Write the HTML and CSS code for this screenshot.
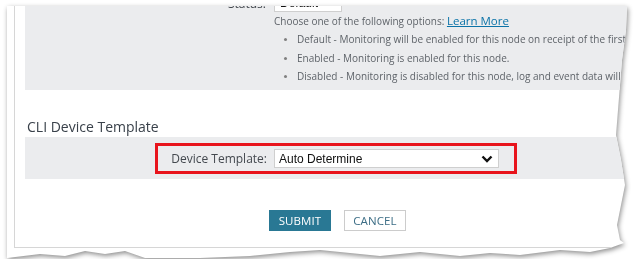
FILE: index.html
```html
<!DOCTYPE html>
<html lang="en">

<head>
  <meta charset="UTF-8" />
  <meta name="viewport" content="width=device-width, initial-scale=1" />
  <title>Node Settings - CLI Device Template</title>
  <link rel="stylesheet" href="styles.css">
</head>

<body>
  <div class="shadow-wrap">
    <div class="paper">
      <div class="frame">
        <div class="content">

          <section class="panel status-panel">
            <div class="field-row status-row">
              <span class="field-label">Status:</span>
              <div class="select select-small">
                <span>Default</span>
              </div>
            </div>
            <div class="field-row">
              <span></span>
              <div class="help">
                <p class="help-intro">Choose one of the following options: <a href="#">Learn More</a></p>
                <ul class="help-list">
                  <li>Default - Monitoring will be enabled for this node on receipt of the first event from it.</li>
                  <li>Enabled - Monitoring is enabled for this node.</li>
                  <li>Disabled - Monitoring is disabled for this node, log and event data will not be stored.</li>
                </ul>
              </div>
            </div>
          </section>

          <h2 class="section-title">CLI Device Template</h2>

          <section class="panel template-panel">
            <div class="highlight">
              <label class="field-label">Device Template:</label>
              <div class="select select-wide">
                <span>Auto Determine</span>
                <svg class="chevron" width="12" height="8" viewBox="0 0 12 8" aria-hidden="true">
                  <path d="M1.5 1.5 L6 6 L10.5 1.5" fill="none" stroke="#111" stroke-width="2.4" />
                </svg>
              </div>
            </div>
          </section>

          <div class="actions">
            <button type="button" class="btn btn-primary">SUBMIT</button>
            <button type="button" class="btn btn-secondary">CANCEL</button>
          </div>

        </div>
      </div>
    </div>
  </div>
</body>

</html>
```

FILE: styles.css
```css
:root {
  --color-panel: #ebecee;
  --color-border: #d6d6d6;
  --color-text: #5e6369;
  --color-heading: #39414a;
  --color-link: #0b73a8;
  --color-primary: #297894;
  --color-highlight: #e8141c;
  --font-ui: 'Open Sans', 'DejaVu Sans', sans-serif;
}

* {
  box-sizing: border-box;
}

body {
  margin: 0;
  background: #ffffff;
  font-family: var(--font-ui);
  color: var(--color-text);
  -webkit-font-smoothing: antialiased;
}

/* torn paper screenshot */
.shadow-wrap {
  padding: 6px 0 0 7px;
  filter: drop-shadow(1px 2px 2.5px rgba(0, 0, 0, 0.45));
}

.paper {
  width: 621px;
  height: 253px;
  background: #ffffff;
  overflow: hidden;
  clip-path: polygon(0 0, 620px 0, 619px 24px, 615px 54px, 613px 79px, 611px 104px, 609px 129px,
      614px 154px, 618px 179px, 614px 199px, 610px 219px, 613px 234px, 617px 237px,
      603px 242px, 583px 246px, 553px 244px, 513px 249px, 483px 247px, 453px 250px,
      413px 246px, 373px 250px, 343px 247px, 313px 244px, 283px 246px, 243px 250px,
      193px 252px, 138px 252px, 118px 245px, 98px 248px, 78px 245px, 58px 250px,
      33px 248px, 0 252px);
}

.frame {
  margin-left: 7px;
  width: 700px;
  height: 242px;
  border-left: 1px solid var(--color-border);
  border-bottom: 1px solid var(--color-border);
  padding-left: 10px;
}

.content {
  width: 625px;
}

.panel {
  display: flow-root;
  background: var(--color-panel);
}

/* status panel */
.status-panel {
  height: 84px;
  font-size: 10px;
}

.field-row {
  display: grid;
  grid-template-columns: 241px 1fr;
  column-gap: 8px;
}

.status-row {
  margin-top: -12px;
  align-items: center;
}

.field-label {
  text-align: right;
  color: #44494f;
}

.status-row .field-label {
  font-size: 12px;
}

.help p {
  margin: 0;
  line-height: 17px;
}

.help a {
  color: var(--color-link);
  font-size: 11.5px;
}

.help-list {
  margin: 0;
  padding-left: 23px;
  white-space: nowrap;
}

.help-list li {
  line-height: 18.5px;
}

.help-list li::marker {
  color: #808080;
  font-size: 8px;
}

/* select boxes */
.select {
  display: flex;
  align-items: center;
  justify-content: space-between;
  background: #ffffff;
  border: 1px solid #cfcfcf;
  font-family: 'Liberation Sans', Arial, sans-serif;
  color: #111;
}

.select-small {
  width: 68px;
  height: 18px;
  padding: 0 5px;
  font-size: 12px;
}

.select-wide {
  width: 225px;
  height: 19px;
  padding: 0 5px 0 4px;
  font-size: 12px;
}

.section-title {
  margin: 26px 0 0 2px;
  font-weight: 400;
  font-size: 14px;
  line-height: 21px;
  color: var(--color-heading);
}

/* template panel */
.template-panel {
  height: 42px;
  padding-top: 6px;
}

.highlight {
  width: 362px;
  height: 31px;
  margin-left: 130px;
  border: 3px solid var(--color-highlight);
  display: flex;
  align-items: center;
  justify-content: flex-end;
  gap: 7px;
  padding-right: 15px;
}

.highlight .field-label {
  font-size: 12px;
}

.actions {
  display: flex;
  justify-content: center;
  gap: 13px;
  margin-top: 31px;
}

.btn {
  width: 62px;
  height: 21px;
  padding: 0;
  font-family: var(--font-ui);
  font-size: 11.5px;
  letter-spacing: 0.1px;
  cursor: pointer;
}

.btn-primary {
  background: var(--color-primary);
  border: none;
  color: #ffffff;
}

.btn-secondary {
  background: #ffffff;
  border: 1px solid #cccccc;
  color: #3d6e86;
}
```
